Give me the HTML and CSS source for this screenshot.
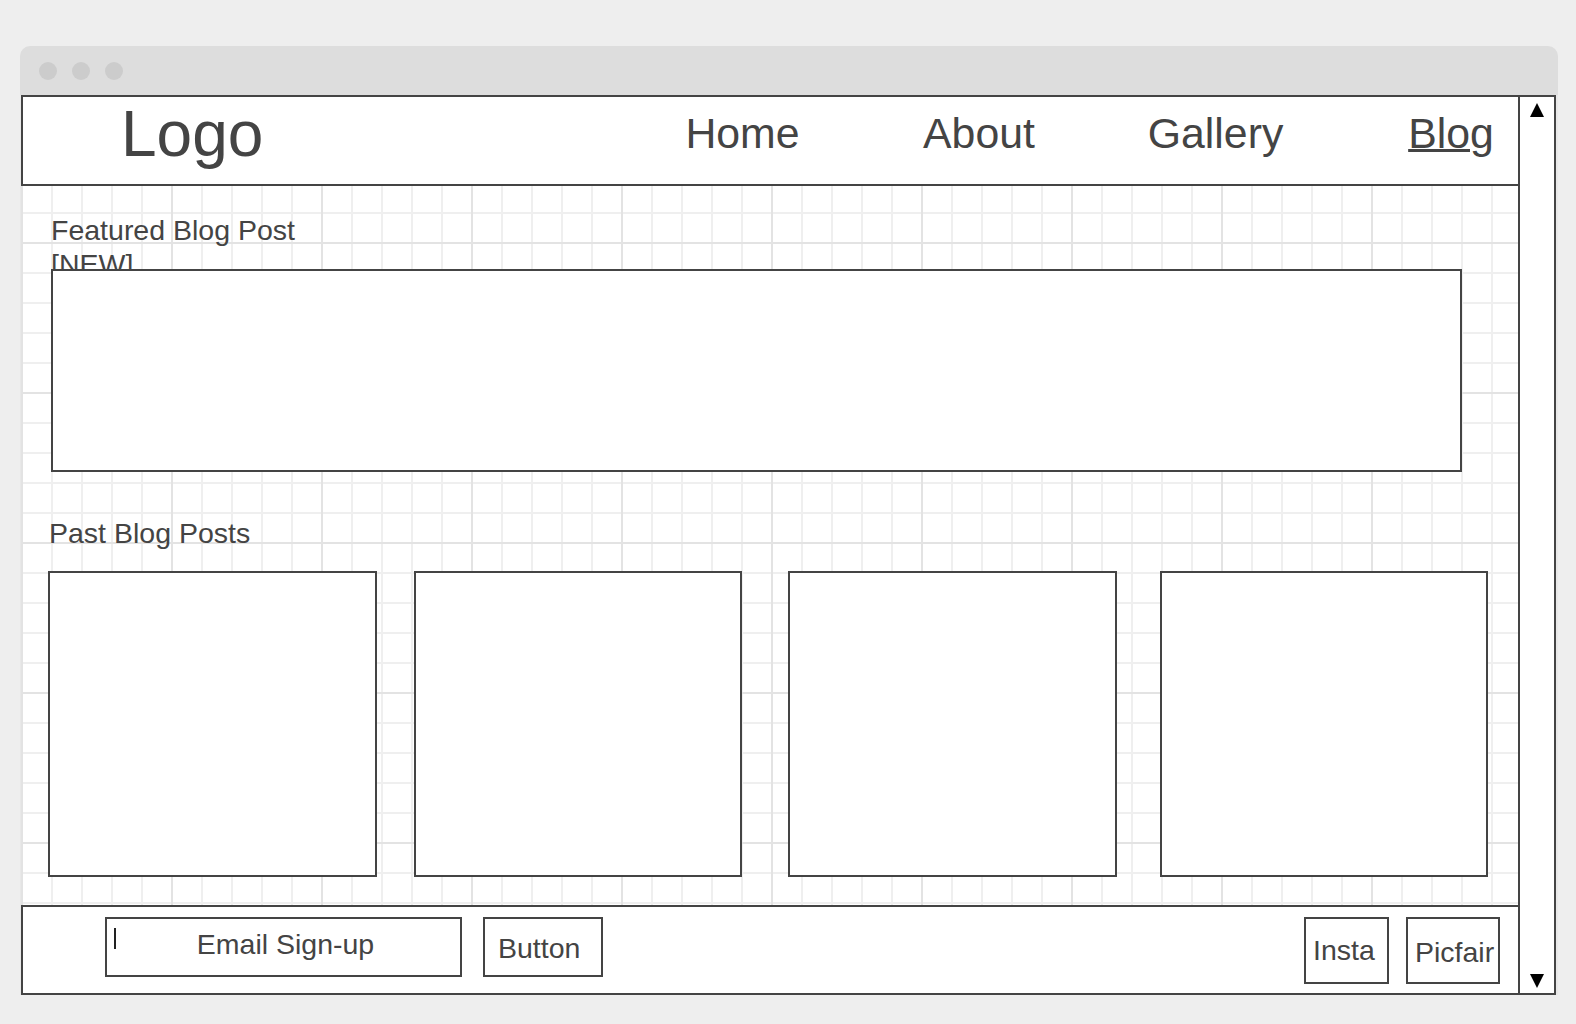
FILE: index.html
```html
<!DOCTYPE html>
<html lang="en">
<head>
<meta charset="utf-8">
<title>Blog wireframe</title>
<link rel="stylesheet" href="styles.css">
</head>
<body>
<div class="window">
  <div class="titlebar">
    <span class="dot"></span><span class="dot"></span><span class="dot"></span>
  </div>
  <div class="frame">
    <div class="main">
      <header class="header">
        <div class="logo">Logo</div>
        <nav class="nav">
          <span class="nav-item">Home</span>
          <span class="nav-item">About</span>
          <span class="nav-item">Gallery</span>
          <span class="nav-item nav-item--active">Blog</span>
        </nav>
      </header>
      <section class="content">
        <div class="featured-label">Featured Blog Post [NEW]</div>
        <div class="featured-box"></div>
        <div class="past-label">Past Blog Posts</div>
        <div class="past-row">
          <div class="post-card"></div>
          <div class="post-card post-card--second"></div>
          <div class="post-card post-card--third"></div>
          <div class="post-card post-card--fourth"></div>
        </div>
      </section>
      <footer class="footer">
        <div class="email-box"><span class="cursor"></span>Email Sign-up</div>
        <div class="btn">Button</div>
        <div class="social social--insta">Insta</div>
        <div class="social social--picfair">Picfair</div>
      </footer>
    </div>
    <div class="scrollbar">
      <svg class="arrow" width="14" height="14" viewBox="0 0 14 14"><polygon points="7,0 14,14 0,14" fill="#000"/></svg>
      <svg class="arrow" width="14" height="14" viewBox="0 0 14 14"><polygon points="0,0 14,0 7,14" fill="#000"/></svg>
    </div>
  </div>
</div>
</body>
</html>
```
FILE: styles.css
```css
* { box-sizing: border-box; }

html, body {
  margin: 0;
  padding: 0;
  background: #eeeeee;
}

body {
  font-family: "Liberation Sans", Arial, sans-serif;
  color: #444444;
  width: 1576px;
  height: 1024px;
  overflow: hidden;
}

.window {
  margin: 46px 0 0 20px;
  width: 1538px;
}

.titlebar {
  height: 49px;
  background: #dddddd;
  border-radius: 10px 10px 0 0;
  display: flex;
  align-items: center;
  padding-left: 19px;
  gap: 15px;
}

.dot {
  width: 18px;
  height: 18px;
  border-radius: 50%;
  background: #cccccc;
}

.frame {
  display: flex;
  height: 900px;
  padding-left: 1px;
  background: #e8e8e8;
}

.main {
  width: 1499px;
  display: flex;
  flex-direction: column;
  background-color: #ffffff;
  background-image:
    linear-gradient(to right, #e3e3e3 2px, transparent 2px),
    linear-gradient(to bottom, #e3e3e3 2px, transparent 2px),
    linear-gradient(to right, #efefef 2px, transparent 2px),
    linear-gradient(to bottom, #efefef 2px, transparent 2px);
  background-size: 150px 150px, 150px 150px, 30px 30px, 30px 30px;
  background-position: 0 -3px, 0 -3px, 0 -3px, 0 -3px;
}

/* Header */
.header {
  height: 91px;
  border: 2px solid #444444;
  background: #ffffff;
  display: flex;
  align-items: flex-start;
  padding-left: 98px;
}

.logo {
  font-size: 64px;
  line-height: 64px;
  margin-top: 5px;
}

.nav {
  margin-left: auto;
  margin-top: 15px;
  display: grid;
  grid-template-columns: 136px 136px 136px 134px;
  column-gap: 100.5px;
  justify-items: center;
  font-size: 42.8px;
  line-height: 42px;
}

.nav-item--active {
  text-decoration: underline;
  text-decoration-thickness: 3px;
  text-underline-offset: 1px;
}

/* Content */
.content {
  flex: 1;
  padding-top: 27px;
}

.featured-label {
  margin-left: 30px;
  width: 262px;
  height: 56px;
  overflow: hidden;
  font-size: 28.5px;
  line-height: 34px;
}

.featured-box {
  margin-left: 30px;
  width: 1411px;
  height: 203px;
  border: 2px solid #444444;
  background: #ffffff;
}

.past-label {
  margin: 45px 0 0 28px;
  font-size: 28.5px;
  line-height: 32px;
}

.past-row {
  margin: 22px 0 0 27px;
  width: 1440px;
  display: flex;
}

.post-card {
  width: 329px;
  height: 306px;
  border: 2px solid #444444;
  background: #ffffff;
}

.post-card--second { margin-left: 37px; }
.post-card--third { margin-left: 46px; }
.post-card--fourth { margin-left: 43px; }

/* Footer */
.footer {
  height: 90px;
  border: 2px solid #444444;
  background: #ffffff;
  display: flex;
  align-items: flex-start;
  padding: 10px 18px 0 82px;
  font-size: 28.5px;
  line-height: 32px;
}

.email-box {
  position: relative;
  width: 357px;
  height: 60px;
  border: 2px solid #444444;
  text-align: center;
  padding: 9px 0 0 4px;
}

.cursor {
  position: absolute;
  left: 7px;
  top: 9px;
  width: 2px;
  height: 21px;
  background: #222222;
}

.btn {
  margin-left: 21px;
  width: 120px;
  height: 60px;
  border: 2px solid #444444;
  padding: 13px 0 0 13px;
}

.social {
  height: 67px;
  border: 2px solid #444444;
  padding-left: 7px;
  white-space: nowrap;
}

.social--insta {
  margin-left: auto;
  width: 85px;
  padding-top: 15px;
  padding-left: 7px;
}

.social--picfair {
  margin-left: 17px;
  width: 94px;
  padding-top: 17px;
}

/* Scrollbar */
.scrollbar {
  width: 38px;
  margin-left: -2px;
  border: 2px solid #444444;
  background: #ffffff;
  display: flex;
  flex-direction: column;
  justify-content: space-between;
  align-items: center;
  padding: 6px 0 5px 0;
}

.arrow {
  display: block;
}
```
